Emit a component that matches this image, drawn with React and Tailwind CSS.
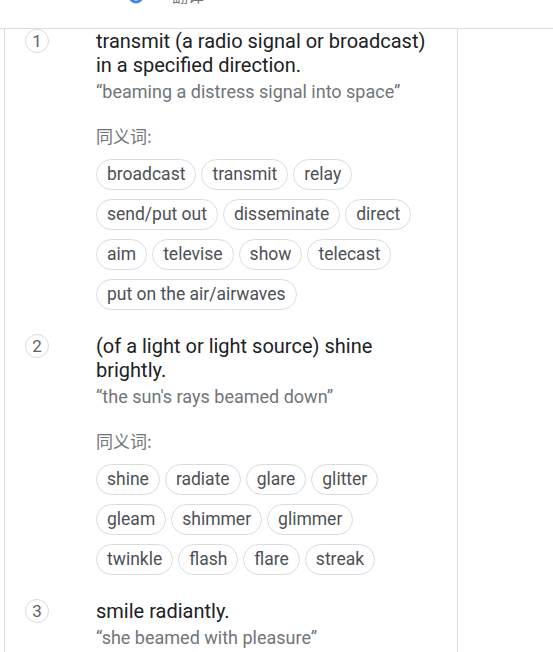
import React from "react";

const senses = [
  {
    n: 1,
    def: "transmit (a radio signal or broadcast) in a specified direction.",
    ex: "“beaming a distress signal into space”",
    syn: [
      "broadcast", "transmit", "relay", "send/put out", "disseminate", "direct",
      "aim", "televise", "show", "telecast", "put on the air/airwaves",
    ],
  },
  {
    n: 2,
    def: "(of a light or light source) shine brightly.",
    ex: "“the sun's rays beamed down”",
    syn: [
      "shine", "radiate", "glare", "glitter", "gleam", "shimmer", "glimmer",
      "twinkle", "flash", "flare", "streak",
    ],
  },
  {
    n: 3,
    def: "smile radiantly.",
    ex: "“she beamed with pleasure”",
    syn: [],
  },
];

function Sense({ s }) {
  return (
    <div className="flex items-start">
      <div className="w-[91px] shrink-0 pl-[20px]">
        <div className="w-[24px] h-[24px] rounded-full border border-[#dadce0] flex items-center justify-center text-[17px] leading-none text-[#5f6368]">
          {s.n}
        </div>
      </div>
      <div className="w-[335px] shrink-0">
        <div className="text-[20px] leading-[24px] text-[#202124]">{s.def}</div>
        <div className="mt-[3px] text-[18px] leading-[24px] text-[#70757a]">{s.ex}</div>
        {s.syn.length > 0 && (
          <>
            <div className="mt-[20px] text-[17px] leading-[24px] text-[#70757a] font-['Noto_Sans_CJK_SC',sans-serif]">
              同义词:
            </div>
            <div className="mt-[11px] flex flex-wrap gap-x-[5px] gap-y-[9px]">
              {s.syn.map((w) => (
                <div
                  key={w}
                  className="h-[31px] px-[10px] rounded-full border border-[#dadce0] flex items-center text-[17.5px] text-[#4d5156] whitespace-nowrap"
                >
                  {w}
                </div>
              ))}
            </div>
          </>
        )}
      </div>
    </div>
  );
}

export default function App() {
  return (
    <div className="w-[553px] h-[652px] overflow-hidden bg-white font-['Roboto',sans-serif]">
      <div className="relative h-[29px] overflow-hidden border-b border-[#dadce0]">
        <svg className="absolute left-[128px] top-[-10px]" width="16" height="16" viewBox="0 0 16 16">
          <circle cx="8" cy="6" r="6" fill="none" stroke="#4285f4" strokeWidth="3" />
        </svg>
        <div className="absolute left-[172px] top-[-17px] text-[16px] text-[#70757a] font-['Noto_Sans_CJK_SC',sans-serif]">
          翻译
        </div>
      </div>
      <div className="ml-[4px] w-[454px] h-[700px] border-x border-[#dadce0] flex flex-col gap-[24px]">
        {senses.map((s) => (
          <Sense key={s.n} s={s} />
        ))}
      </div>
    </div>
  );
}
